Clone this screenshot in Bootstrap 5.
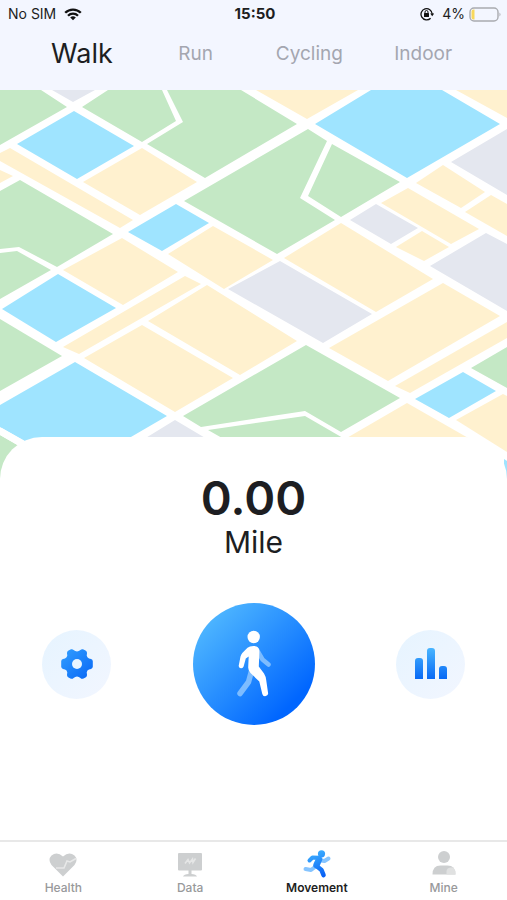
<!DOCTYPE html>
<html lang="en">
<head>
<meta charset="utf-8">
<meta name="viewport" content="width=device-width, initial-scale=1">
<title>Movement</title>
<link href="https://cdn.jsdelivr.net/npm/bootstrap@5.3.0/dist/css/bootstrap.min.css" rel="stylesheet">
<style>
  body { font-family: Inter, "Liberation Sans", sans-serif; color: #1d1e22; background: #fff; }
  .top-area { background: #f3f6ff; height: 90px; }
  .status-bar { height: 28px; font-size: 14px; line-height: 28px; padding: 0 5px 0 8px; }
  .status-bar > * { flex: 1 1 0; }
  .status-bar .clock { font-size: 15px; }
  .mode-tabs { padding: 0 27px 0 25px; height: 52px; }
  .mode-tabs button { flex: 1 1 0; border: 0; background: none; padding: 0; font-size: 19px; line-height: 52px; color: #a4a6b0; }
  .mode-tabs button.active { font-size: 27px; color: #1d1e22; }
  .map-view svg { width: 100%; height: auto; }
  .sheet { margin-top: -53px; border-radius: 42px 42px 0 0; padding-top: 32px; }
  .distance { font-size: 47px; line-height: 58px; font-weight: 600; }
  .unit { font-size: 30px; line-height: 30px; }
  .controls { padding: 46px 42px; }
  .controls button { border: 0; padding: 0; }
  .side-btn { width: 69px; height: 69px; background: linear-gradient(135deg, #e6f4ff, #f2f6ff); }
  .start-btn { width: 122px; height: 122px; background: linear-gradient(135deg, #53bbff 8%, #2a91ff 45%, #0066ff 82%); }
  .tab-bar { border-top: 2px solid #e8e8e8; height: 60px; padding-top: 6px; }
  .tab-bar a { flex: 1 1 0; gap: 2px; font-size: 12px; line-height: 16px; font-weight: 500; color: #98999b; text-decoration: none; }
  .tab-bar a.active { color: #1d1e22; font-weight: 600; }
  .tab-bar svg { width: 30px; height: 30px; }
  .green { fill: #c4e8c5; } .blue { fill: #9fe4ff; } .sand { fill: #fff1cf; } .grey { fill: #e4e7ef; }
</style>
</head>
<body>
<div class="d-flex flex-column min-vh-100">
  <header class="top-area">
    <div class="status-bar d-flex align-items-center">
      <div class="d-flex align-items-center gap-2"><span>No SIM</span>
        <svg width="18" height="13" viewBox="0 0 18 13" fill="none" stroke="#111" stroke-width="2.3" aria-label="Wi-Fi"><path d="M1.2 4.8a11 11 0 0 1 15.6 0M4 7.7a7 7 0 0 1 10 0"/><path d="M9 12.3 6.2 9.6a4 4 0 0 1 5.600 0z" fill="#111" stroke="none"/></svg>
      </div>
      <div class="clock text-center fw-bold">15:50</div>
      <div class="d-flex align-items-center justify-content-end">
        <svg class="me-2" width="14" height="14" viewBox="0 0 14 14" aria-label="Rotation lock"><path d="M10.600 11.200A5.600 5.600 0 1 1 12.200 7" fill="none" stroke="#111" stroke-width="1.300"/><path d="M10.200 6.400h4l-2 2.800z" fill="#111"/><rect x="4" y="6" width="5" height="4" rx=".5" fill="#111"/><path d="M5 6.300V5a1.500 1.500 0 0 1 3 0v1.300" fill="none" stroke="#111"/></svg>
        <span>4%</span>
        <svg class="ms-1" width="33" height="15" viewBox="0 0 33 15" aria-label="Battery"><rect x="1" y="1" width="28" height="13" rx="4" fill="none" stroke="#a9abb0" stroke-width="1.400"/><path d="M5.500 2.500v10H4.500a2 2 0 0 1-2-2v-6a2 2 0 0 1 2-2z" fill="#f8d85c"/><path d="M30.500 5.500q2 2 0 4z" fill="#a9abb0"/></svg>
      </div>
    </div>
    <nav class="mode-tabs d-flex" aria-label="Activity">
      <button type="button" class="active">Walk</button>
      <button type="button">Run</button>
      <button type="button">Cycling</button>
      <button type="button">Indoor</button>
    </nav>
  </header>

  <div class="map-view">
    <svg class="d-block" viewBox="0 90 507 400" role="img" aria-label="Map">
      <g class="green">
        <path d="M0 90H41L67 107 0 145zM108 90H162L176 121 142 142 82 107zM167 90H241L297 124 205 178 147 144 183 122z"/>
        <path d="M20 180 113 234 57 267 19 247 0 249V191zM0 253 17 251 51 270 0 299zM0 319 62 356 0 391zM0 435 40 458 0 490z"/>
        <path d="M308 129 327 141 300 198 335 220 277 254 184 201zM332 144 400 182 341 217 308 196z"/>
        <path d="M306 345 400 398 341 432 305 411 201 427 183 416zM305 416 343 438H222L208 430zM507 347V388L471 368z"/>
      </g>
      <g class="blue">
        <path d="M74 111 134 146 77 179 17 144zM176 204 209 223 162 251 128 232zM58 274 116 308 56 342 2 309z"/>
        <path d="M75 362 167 416 100 455 H50L0 427V405zM371 90H442L500 124 407 178 315 124zM463 372 496 391 449 418 415 399zM504 459 507 461V490H504z"/>
      </g>
      <path d="M0 431 40 454" stroke="#fff" stroke-width="7"/>
      <g class="sand">
        <path d="M142 148 197 182 140 215 83 182zM10 148 133 220 120 228 0 161V153zM0 170 13 176 0 183z"/>
        <path d="M213 226 273 260 224 289 168 254zM122 238 178 272 123 305 63 270zM185 276 201 284 79 354 63 347z"/>
        <path d="M142 325 233 378 175 412 84 358zM207 285 297 341 240 375 148 321zM256 90H358L307 119zM456 90H507V118z"/>
        <path d="M443 165 485 192 461 208 416 183zM491 195 507 204V236L465 212zM408 188 479 229 451 244 381 203zM422 231 449 247 424 261 396 247z"/>
        <path d="M341 223 433 279 376 312 284 258zM443 283 500 316 388 381 329 348zM507 322V338L410 393 395 386z"/>
        <path d="M407 403 470 439H345zM503 394 507 396V452L456 420z"/>
      </g>
      <g class="grey">
        <path d="M52 90H95L73 102zM280 261 372 314 323 343 228 289zM507 129V195L451 162zM376 204 418 228 391 244 350 220z"/>
        <path d="M486 233 507 244V311L430 266zM175 420 207 439H144z"/>
      </g>
    </svg>
  </div>

  <main class="sheet bg-white position-relative flex-grow-1">
    <div class="distance text-center">0.00</div>
    <div class="unit text-center">Mile</div>
    <div class="controls d-flex align-items-center justify-content-between">
      <button type="button" class="side-btn rounded-circle d-flex align-items-center justify-content-center" aria-label="Settings">
        <svg width="34" height="32" viewBox="0 0 34 32"><defs><linearGradient id="gearFill" x1="0" y1="0" x2="1" y2="1"><stop stop-color="#329fff"/><stop offset="1" stop-color="#0866f5"/></linearGradient></defs>
          <path fill="url(#gearFill)" d="M8.500 2.500 11 1.300Q12.500.8 13.600 2L15.200 3.100Q17 4 18.800 3.100L20.400 2Q21.500.8 23 1.300L25.500 2.500Q27.400 3.500 27 5.500L26.700 7.600Q27 9.700 29 10.500L31 11Q32.700 11.600 32.800 13.200V18.800Q32.700 20.400 31 21L29 21.500Q27 22.300 26.700 24.400L27 26.500Q27.400 28.500 25.500 29.500L23 30.700Q21.500 31.200 20.400 30L18.800 28.900Q17 28 15.200 28.900L13.600 30Q12.500 31.200 11 30.700L8.500 29.500Q6.600 28.500 7 26.500L7.300 24.400Q7 22.300 5 21.500L3 21Q1.300 20.400 1.200 18.800V13.200Q1.300 11.600 3 11L5 10.500Q7 9.700 7.300 7.600L7 5.500Q6.600 3.500 8.500 2.500z"/><circle cx="17" cy="16" r="5" fill="#e9f5ff"/></svg>
      </button>
      <button type="button" class="start-btn rounded-circle d-flex align-items-center justify-content-center" aria-label="Start walk">
        <svg width="36" height="68" viewBox="0 0 36 68" fill="none" stroke="#fff" stroke-linecap="round" stroke-linejoin="round">
          <g stroke="#7dbcff"><path stroke-width="4.500" d="M21 20 26.500 29.500 32.500 34.500"/><path stroke-width="5.500" d="M15.500 41 12.500 52 4 63.500"/></g>
          <circle cx="17.700" cy="7" r="6.200" fill="#fff" stroke="none"/>
          <path d="M17.500 16C22 16 23.500 18.500 23.400 22L22.800 36.500 28 43.500Q29.800 46.300 30.200 50L32 62.500A2.900 2.900 0 0 1 26.300 64L23.300 51.500 14.500 43Q12 40.500 12.200 37L12.700 26.500 9.800 28.500 7.600 36.500A2.500 2.500 0 0 1 2.700 35.700L4.500 26.500Q5 24.500 6.300 23L11.500 17.700Q13.500 16 17.500 16z" fill="#fff" stroke="none"/>
        </svg>
      </button>
      <button type="button" class="side-btn rounded-circle d-flex align-items-center justify-content-center" aria-label="Statistics">
        <svg width="34" height="34" viewBox="0 0 34 34"><defs><linearGradient id="barFill" x1="0" y1="0" x2="0" y2="1"><stop stop-color="#48b5ff"/><stop offset="1" stop-color="#0869f5"/></linearGradient></defs>
          <g fill="url(#barFill)"><path d="M1 32V14q0-3 3-3h2q3 0 3 3v18zM13 32V4q0-3 3-3h2q3 0 3 3v28zM25 32V22q0-3 3-3h2q3 0 3 3v10z"/></g></svg>
      </button>
    </div>
  </main>

  <nav class="tab-bar d-flex bg-white" aria-label="Main">
    <a href="#" class="d-flex flex-column align-items-center">
      <svg viewBox="0 0 30 30"><path fill="#cdcfd0" d="M15 28.500 3.500 17Q-.5 11.500 3.500 7.500 9 3 15 8.500 21 3 26.500 7.500 30.500 11.500 26.500 17z"/><path d="M8 20h8l3-7 3 1 6-3.500" fill="none" stroke="#e7e8e8" stroke-width="1.600"/></svg>
      Health</a>
    <a href="#" class="d-flex flex-column align-items-center">
      <svg viewBox="0 0 30 30"><path fill="#cdcfd0" d="M4 5h22q1 0 1 1v15.500q0 1-1 1h-9.500V26q4.500 0 5.500 2.500H8Q9 26 13.500 26v-3.500H4q-1 0-1-1V6q0-1 1-1z"/><path d="m10 15.500 3-4 1.500 3.500 3-4 .5 3.500 2.500-4" fill="none" stroke="#e5e6e6" stroke-width="1.600"/></svg>
      Data</a>
    <a href="#" class="active d-flex flex-column align-items-center" aria-current="page">
      <svg viewBox="0 0 30 30" fill="none" stroke-linecap="round" stroke-linejoin="round"><defs><linearGradient id="runFill" gradientUnits="userSpaceOnUse" x1="10" y1="3" x2="20" y2="29"><stop stop-color="#3fb2ff"/><stop offset="1" stop-color="#075ff5"/></linearGradient></defs>
        <path stroke="#85c4ff" stroke-width="4" d="m19 12.500 3.500.5 4-2.500M13 19l-4 3-5.500-1"/>
        <circle cx="19.500" cy="5.800" r="3.600" fill="url(#runFill)"/>
        <path stroke="url(#runFill)" stroke-width="4" d="m7.500 12.500 3-3 6.500.3"/><path stroke="url(#runFill)" stroke-width="6.500" d="M17 11.500 14.500 17"/><path stroke="url(#runFill)" stroke-width="4.600" d="m14.500 18 5 4 2 5"/></svg>
      Movement</a>
    <a href="#" class="d-flex flex-column align-items-center">
      <svg viewBox="0 0 30 30"><circle cx="15" cy="9" r="6" fill="#cdcfd0"/><path fill="#cdcfd0" d="M3.500 26.500q0-9 8-9h7q8 0 8 9z"/><path fill="#e0e1e1" d="M17.500 26.500v-3q0-3.500 4-4h3q2 2.500 2 7z"/></svg>
      Mine</a>
  </nav>
</div>
<script src="https://cdn.jsdelivr.net/npm/bootstrap@5.3.0/dist/js/bootstrap.bundle.min.js"></script>
</body>
</html>
